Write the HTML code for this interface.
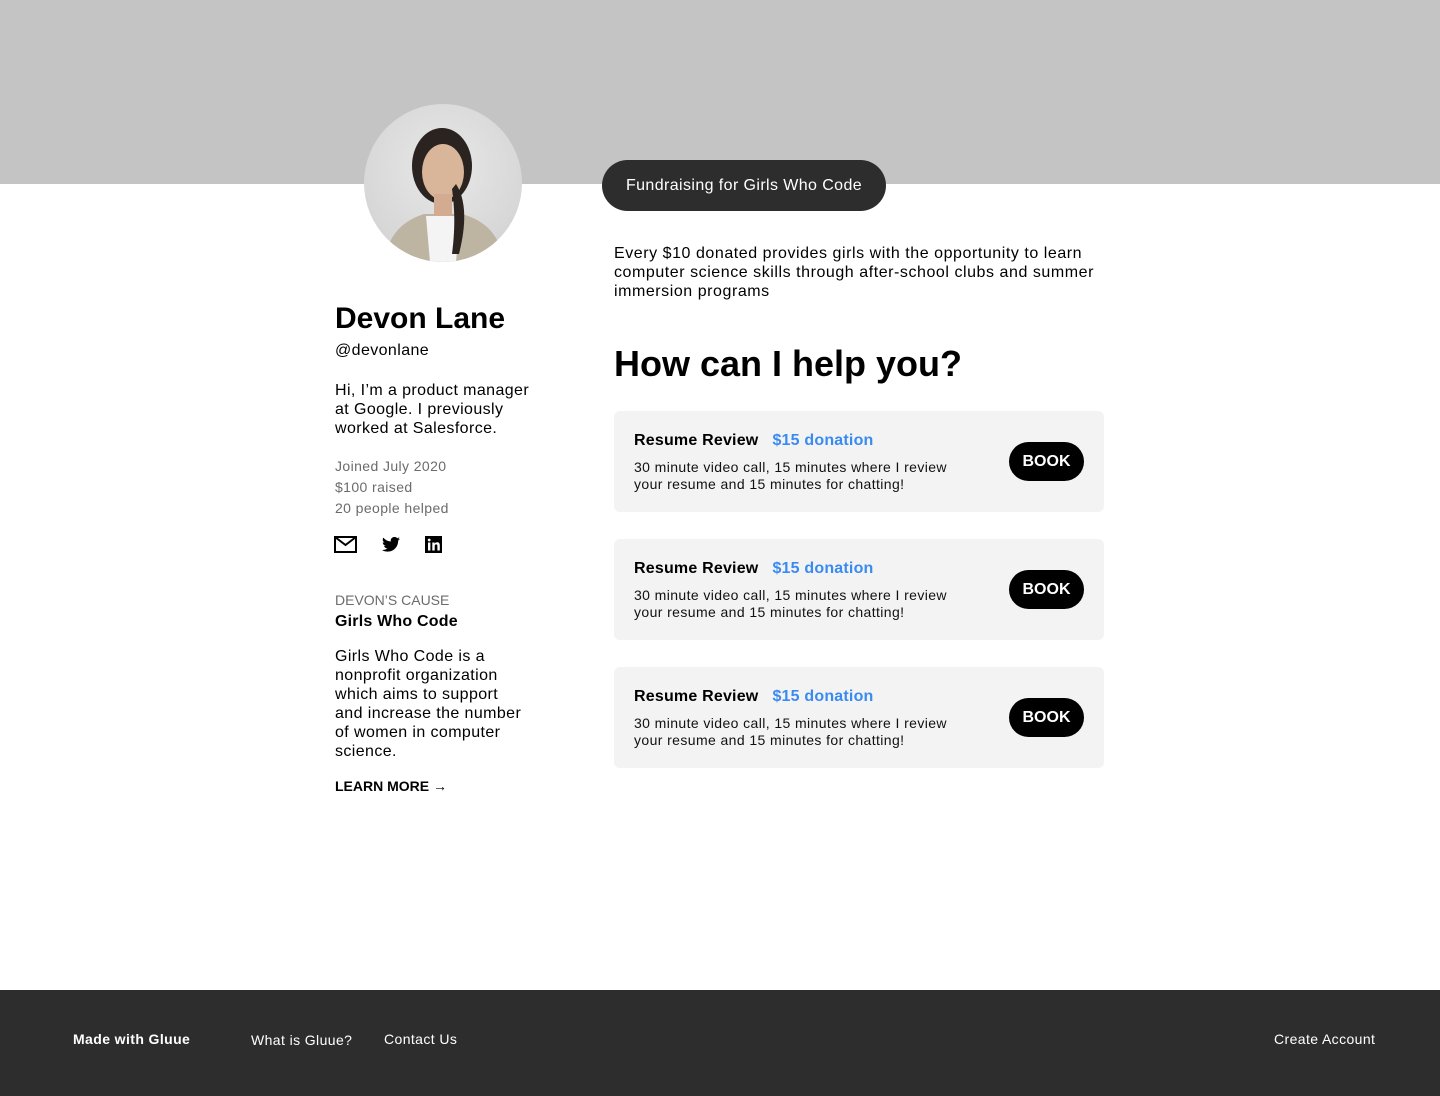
<!DOCTYPE html>
<html><head><meta charset="utf-8"><style>
*{margin:0;padding:0;box-sizing:border-box}
body{width:1440px;height:1096px;position:relative;font-family:"Liberation Sans",sans-serif;background:#fff;color:#000;overflow:hidden;letter-spacing:0.4px}
.a{position:absolute;white-space:nowrap}
.banner{position:absolute;left:0;top:0;width:1440px;height:184px;background:#c4c4c4}
.avatar{position:absolute;left:364px;top:104px;width:158px;height:158px;border-radius:50%;background:radial-gradient(circle at 50% 40%,#e8e8e8,#cfcfcf);overflow:hidden}
.pill{position:absolute;left:602px;top:160px;width:284px;height:51px;border-radius:26px;background:#2d2d2d;color:#fff;font-size:16px;line-height:51px;text-align:center}
.card{position:absolute;left:614px;width:490px;height:101px;background:#f3f3f3;border-radius:6px}
.card .t{position:absolute;left:20px;top:21px;font-size:16px;font-weight:bold;white-space:nowrap;letter-spacing:0.2px}
.card .t span{color:#3a8bf0;margin-left:14px}
.card .d{position:absolute;left:20px;top:48px;font-size:14px;line-height:17px;color:#111}
.card .b{position:absolute;left:395px;top:31px;width:75px;height:39px;border-radius:20px;background:#000;color:#fff;font-size:16px;line-height:39px;text-align:center;font-weight:bold;letter-spacing:0}
.gray{color:#6b6b6b;font-size:14px}
footer{position:absolute;left:0;top:990px;width:1440px;height:106px;background:#2d2d2d;color:#fff;font-size:14px}
</style></head><body>
<div class="banner"></div>
<div class="avatar">
<svg width="158" height="158" viewBox="0 0 158 158">
<path d="M20 158 C25 125 45 115 60 110 L98 110 C115 115 135 125 140 158Z" fill="#bdb4a2"/>
<path d="M62 112 L96 112 L92 158 L66 158Z" fill="#f4f4f4"/>
<ellipse cx="78" cy="62" rx="30" ry="38" fill="#2a2320"/>
<ellipse cx="79" cy="68" rx="21" ry="28" fill="#d9b59a"/>
<rect x="70" y="90" width="18" height="22" fill="#d2ab90"/>
<path d="M92 80 C105 100 100 130 95 150 L88 150 C92 120 90 100 88 85Z" fill="#2a2320"/>
</svg></div>
<div class="pill">Fundraising for Girls Who Code</div>

<div class="a" style="left:335px;top:302px;font-size:30px;font-weight:bold;letter-spacing:0">Devon Lane</div>
<div class="a" style="left:335px;top:342px;font-size:16px">@devonlane</div>
<div class="a" style="left:335px;top:381px;font-size:16px;line-height:19px">Hi, I’m a product manager<br>at Google. I previously<br>worked at Salesforce.</div>
<div class="a gray" style="left:335px;top:456px;line-height:21px">Joined July 2020<br>$100 raised<br>20 people helped</div>
<svg class="a" style="left:334px;top:536px" width="24" height="17" viewBox="0 0 24 17"><rect x="1" y="1" width="21" height="15" fill="none" stroke="#000" stroke-width="2"/><path d="M1 1 L11.5 9 L22 1" fill="none" stroke="#000" stroke-width="2"/></svg>
<svg class="a" style="left:382px;top:537px" width="18" height="15" viewBox="0 0 24 20"><path d="M24 2.4a10 10 0 0 1-2.8.8A5 5 0 0 0 23.3.4a10 10 0 0 1-3.1 1.2A4.9 4.9 0 0 0 11.8 6 14 14 0 0 1 1.7.9a4.9 4.9 0 0 0 1.5 6.6A4.9 4.9 0 0 1 1 6.9a4.9 4.9 0 0 0 3.9 4.8 4.9 4.9 0 0 1-2.2.1 4.9 4.9 0 0 0 4.6 3.4A9.9 9.9 0 0 1 0 17.3 14 14 0 0 0 7.5 19.5c9 0 14-7.5 14-14v-.6A10 10 0 0 0 24 2.4z"/></svg>
<svg class="a" style="left:425px;top:536px" width="17" height="17" viewBox="0 0 17 17"><rect width="17" height="17" fill="#000"/><rect x="3" y="6.5" width="2.4" height="8" fill="#fff"/><circle cx="4.2" cy="4" r="1.4" fill="#fff"/><path d="M7.3 6.5h2.3v1.2c.5-.9 1.5-1.4 2.6-1.4 2 0 2.6 1.3 2.6 3.2v5h-2.4v-4.5c0-1-.3-1.6-1.2-1.6-1 0-1.5.7-1.5 1.8v4.3H7.3z" fill="#fff"/></svg>
<div class="a" style="left:335px;top:592px;font-size:14px;color:#6b6b6b;letter-spacing:0">DEVON’S CAUSE</div>
<div class="a" style="left:335px;top:613px;font-size:16px;font-weight:bold;letter-spacing:0.2px">Girls Who Code</div>
<div class="a" style="left:335px;top:647px;font-size:16px;line-height:19px">Girls Who Code is a<br>nonprofit organization<br>which aims to support<br>and increase the number<br>of women in computer<br>science.</div>
<div class="a" style="left:335px;top:778px;font-size:14px;font-weight:bold;letter-spacing:0">LEARN MORE →</div>

<div class="a" style="left:614px;top:244px;font-size:16px;line-height:19px;letter-spacing:0.55px">Every $10 donated provides girls with the opportunity to learn<br>computer science skills through after-school clubs and summer<br>immersion programs</div>
<div class="a" style="left:614px;top:343px;font-size:36px;font-weight:bold;letter-spacing:0">How can I help you?</div>

<div class="card" style="top:411px"><div class="t">Resume Review<span>$15 donation</span></div><div class="d">30 minute video call, 15 minutes where I review<br>your resume and 15 minutes for chatting!</div><div class="b">BOOK</div></div>
<div class="card" style="top:539px"><div class="t">Resume Review<span>$15 donation</span></div><div class="d">30 minute video call, 15 minutes where I review<br>your resume and 15 minutes for chatting!</div><div class="b">BOOK</div></div>
<div class="card" style="top:667px"><div class="t">Resume Review<span>$15 donation</span></div><div class="d">30 minute video call, 15 minutes where I review<br>your resume and 15 minutes for chatting!</div><div class="b">BOOK</div></div>

<footer>
<div class="a" style="left:73px;top:41px;font-weight:bold">Made with Gluue</div>
<div class="a" style="left:251px;top:42px">What is Gluue?</div>
<div class="a" style="left:384px;top:41px">Contact Us</div>
<div class="a" style="left:1274px;top:41px">Create Account</div>
</footer>
</body></html>
